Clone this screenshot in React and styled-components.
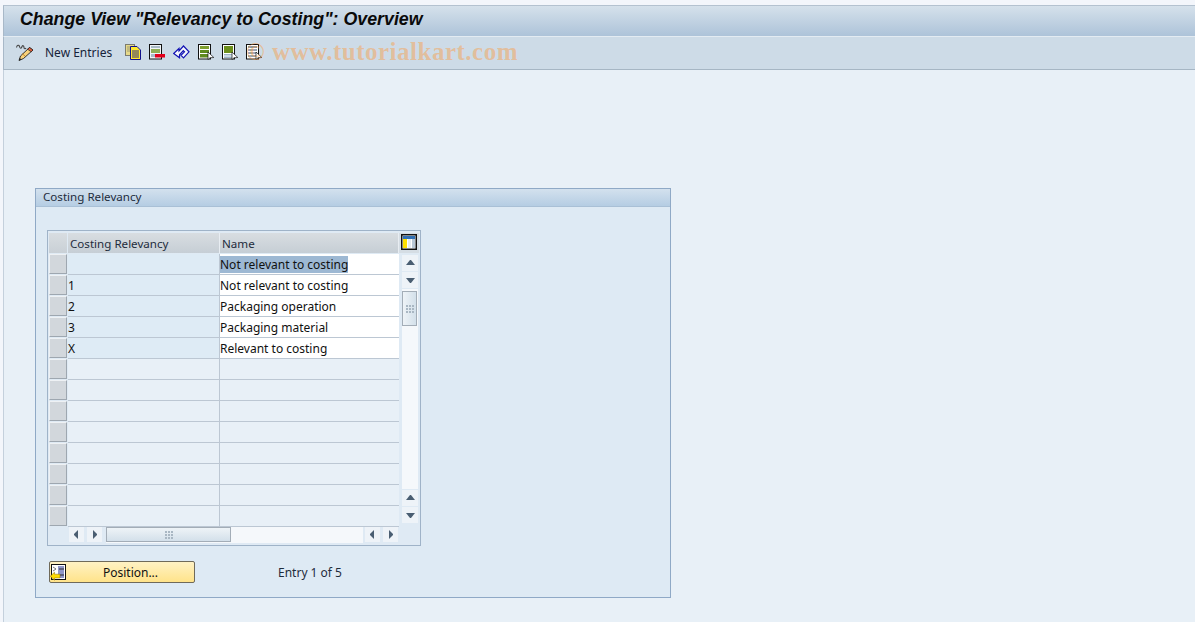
import React from "react";
import styled, { createGlobalStyle } from "styled-components";

const rows = [
  { code: "", name: "Not relevant to costing", selected: true },
  { code: "1", name: "Not relevant to costing" },
  { code: "2", name: "Packaging operation" },
  { code: "3", name: "Packaging material" },
  { code: "X", name: "Relevant to costing" },
  { code: "", name: "", empty: true },
  { code: "", name: "", empty: true },
  { code: "", name: "", empty: true },
  { code: "", name: "", empty: true },
  { code: "", name: "", empty: true },
  { code: "", name: "", empty: true },
  { code: "", name: "", empty: true },
  { code: "", name: "", empty: true },
];

//small triangle used by all the scroll buttons
const Arrow = ({ dir }) => {
  const pts = {
    up: "1,7 5,2 6,2 10,7",
    down: "1,3 10,3 6,8 5,8",
    left: "7,1 7,10 3,6 3,5",
    right: "4,1 4,10 8,6 8,5",
  };
  return (
    <svg width="11" height="11" viewBox="0 0 11 11">
      <polygon points={pts[dir]} fill="#4a5e72" />
    </svg>
  );
};

const Grip = () => (
  <svg width="8" height="8" viewBox="0 0 8 8">
    <g fill="#a9b7c3">
      <rect x="0" y="0" width="2" height="2" />
      <rect x="3" y="0" width="2" height="2" />
      <rect x="6" y="0" width="2" height="2" />
      <rect x="0" y="3" width="2" height="2" />
      <rect x="3" y="3" width="2" height="2" />
      <rect x="6" y="3" width="2" height="2" />
      <rect x="0" y="6" width="2" height="2" />
      <rect x="3" y="6" width="2" height="2" />
      <rect x="6" y="6" width="2" height="2" />
    </g>
  </svg>
);

const PencilIcon = () => (
  <svg width="18" height="17" viewBox="0 0 18 17">
    <path d="M0.5 3.5 C1 1 3 0.5 3.5 2.5 C4 5 5.5 4.5 6 2.5 C6.5 1 8 1.5 8 3.5 C8 5 9.5 5 10 4" fill="none" stroke="#444" strokeWidth="1.1" />
    <path d="M13.5 3.5 L17 6 L7.5 14.5 L3 16.5 L4.5 12 Z" fill="#f8d27a" stroke="#222" strokeWidth="0.9" />
    <path d="M13.5 3.5 L17 6 L15.2 7.8 L11.6 5.2 Z" fill="#e2603f" stroke="#222" strokeWidth="0.7" />
    <path d="M6 9.5 L9 12" stroke="#c98a2b" strokeWidth="1" />
    <path d="M3 16.5 L3.7 14 L5.6 15.4 Z" fill="#222" />
  </svg>
);

const CopyIcon = () => (
  <svg width="16" height="16" viewBox="0 0 16 16">
    <rect x="0.5" y="0.5" width="9" height="11" fill="#e6d98a" stroke="#7c7c70" />
    <path d="M2 3 H8 M2 5 H8 M2 7 H5" stroke="#8a8a70" strokeWidth="0.8" />
    <path d="M5.5 2.5 H12 L15.5 6 V15.5 H5.5 Z" fill="#ffe92e" stroke="#12128c" />
    <path d="M7 7 H14 M7 9 H14 M7 11 H14 M7 13 H14" stroke="#12128c" strokeWidth="0.9" />
  </svg>
);

const DeleteRowIcon = () => (
  <svg width="16" height="16" viewBox="0 0 16 16">
    <rect x="0.5" y="0.5" width="12" height="14.5" fill="#f2f5f7" stroke="#111" />
    <rect x="2" y="2" width="9" height="2" fill="#a9bac6" />
    <rect x="2" y="5" width="9" height="4" fill="#8fae56" />
    <rect x="2" y="10" width="4" height="3" fill="#a9bac6" />
    <rect x="6" y="10" width="10" height="3.5" fill="#e3001b" />
  </svg>
);

const UndoIcon = () => (
  <svg width="17" height="14" viewBox="0 0 17 14">
    <path
      d="M0.7 8.5 L6 3.5 L6 6 L10.5 1 L16 6.8 L10.5 12.8 L8 10.3 L11.5 6.8 L10.3 5.7 L6.5 9.8 L6.5 12.8 Z"
      fill="#f7f9fc"
      stroke="#1414b4"
      strokeWidth="1.2"
      strokeLinejoin="miter"
    />
  </svg>
);

const BlockIcon = ({ variant }) => (
  <svg width="16" height="16" viewBox="0 0 16 16">
    <rect x="0.5" y="0.5" width="12" height="14.5" fill="#fff" stroke="#111" />
    {variant === "top" && (
      <>
        <rect x="2" y="2" width="9" height="7" fill="#6c8f1c" />
        <rect x="2" y="10" width="9" height="1.5" fill="#9cb4c8" />
        <rect x="2" y="12.5" width="9" height="1.5" fill="#9cb4c8" />
      </>
    )}
    {variant === "mid" && (
      <>
        <rect x="2" y="2" width="9" height="3" fill="#7fa02f" />
        <rect x="2" y="6" width="9" height="3" fill="#5f8a1e" />
        <rect x="2" y="10" width="9" height="3.5" fill="#5f8a1e" />
      </>
    )}
    {variant === "plain" && (
      <>
        <rect x="2" y="2" width="9" height="2" fill="#8a97a3" />
        <rect x="2" y="5" width="9" height="2" fill="#9aa7b3" />
        <rect x="2" y="8" width="9" height="2" fill="#9aa7b3" />
        <rect x="2" y="11" width="9" height="2" fill="#9aa7b3" />
      </>
    )}
    <path d="M10 8 L10 15.5 L12 13.8 L15.8 13.5 Z" fill="#fff" stroke="#111" strokeWidth="0.7" />
  </svg>
);

const ColumnsIcon = () => (
  <svg width="16" height="16" viewBox="0 0 16 16">
    <rect x="0.75" y="0.75" width="14.5" height="14.5" fill="#fff" stroke="#111" strokeWidth="1.5" />
    <rect x="2" y="2" width="12" height="3" fill="#2f6fb4" />
    <rect x="2" y="5" width="4" height="9" fill="#ffe000" />
    <rect x="7" y="5" width="3" height="9" fill="#e6ebf0" />
    <rect x="11" y="5" width="3" height="9" fill="#b9c8d6" />
  </svg>
);

const PositionIcon = () => (
  <svg width="17" height="17" viewBox="0 0 17 17">
    <rect x="1.5" y="0.5" width="14" height="15" fill="#fff" stroke="#111" />
    <rect x="8" y="2" width="6" height="12" fill="#8f96c8" />
    <path d="M9 5 H14 M10 11 H14" stroke="#222" strokeWidth="0.9" />
    <path d="M3 3 L6 5 L3 7" fill="none" stroke="#555" strokeWidth="0.8" />
    <path d="M0.3 12.2 L4.5 8.2 V10.2 H10 V14 H4.5 V16.2 Z" fill="#ffdc00" stroke="#8a6a00" strokeWidth="0.5" />
  </svg>
);

function App() {
  return (
    <Page>
      <GlobalStyle />
      <TitleBar>
        <Title>Change View "Relevancy to Costing": Overview</Title>
      </TitleBar>
      <Toolbar>
        <ToolIcon $w={29}>
          <PencilIcon />
        </ToolIcon>
        <ToolLabel>New Entries</ToolLabel>
        <IconGroup>
          <CopyIcon />
          <DeleteRowIcon />
          <UndoIcon />
          <BlockIcon variant="mid" />
          <BlockIcon variant="top" />
          <BlockIcon variant="plain" />
        </IconGroup>
        <Watermark>© www.tutorialkart.com</Watermark>
      </Toolbar>
      <Content>
        <Panel>
          <PanelHead>Costing Relevancy</PanelHead>
          <PanelBody>
            <TableBox>
              <Grid>
                <Corner />
                <HeadCell $w={152}>Costing Relevancy</HeadCell>
                <HeadCell $w={179}>Name</HeadCell>
                <ConfigCell>
                  <ColumnsIcon />
                </ConfigCell>
              </Grid>
              <Middle>
                <RowsWrap>
                  {rows.map((r, i) => (
                    <Row key={i}>
                      <RowSelect />
                      <CodeCell $empty={r.empty}>{r.code}</CodeCell>
                      <NameCell $empty={r.empty}>
                        {r.selected ? <Selected>{r.name}</Selected> : r.name}
                      </NameCell>
                    </Row>
                  ))}
                </RowsWrap>
                <VScroll>
                  <ScrollBtn>
                    <Arrow dir="up" />
                  </ScrollBtn>
                  <ScrollBtn>
                    <Arrow dir="down" />
                  </ScrollBtn>
                  <VTrack>
                    <VThumb>
                      <Grip />
                    </VThumb>
                  </VTrack>
                  <ScrollBtn>
                    <Arrow dir="up" />
                  </ScrollBtn>
                  <ScrollBtn>
                    <Arrow dir="down" />
                  </ScrollBtn>
                </VScroll>
              </Middle>
              <HScroll>
                <HScrollBtn>
                  <Arrow dir="left" />
                </HScrollBtn>
                <HScrollBtn>
                  <Arrow dir="right" />
                </HScrollBtn>
                <HTrack>
                  <HThumb>
                    <Grip />
                  </HThumb>
                </HTrack>
                <HScrollBtn>
                  <Arrow dir="left" />
                </HScrollBtn>
                <HScrollBtn>
                  <Arrow dir="right" />
                </HScrollBtn>
              </HScroll>
            </TableBox>
            <Footer>
              <PositionButton>
                <PositionIcon />
                <span>Position...</span>
              </PositionButton>
              <EntryText>Entry 1 of 5</EntryText>
            </Footer>
          </PanelBody>
        </Panel>
      </Content>
    </Page>
  );
}

const uiFont = `"Noto Sans", "DejaVu Sans", sans-serif`;

const GlobalStyle = createGlobalStyle`
  html, body {
    margin: 0;
    padding: 0;
    background: #f3f6fb;
  }
  body {
    font-family: ${uiFont};
    font-size: 12px;
    color: #111;
  }
`;

const Page = styled.div`
  width: 1195px;
  height: 622px;
  overflow: hidden;
  box-sizing: border-box;
  padding: 5px 0 0 3px;
`;

const TitleBar = styled.div`
  height: 31px;
  box-sizing: border-box;
  padding: 0 0 3px 16px;
  display: flex;
  align-items: center;
  border-top: 1px solid #b4c2d0;
  border-left: 1px solid #a8b8c8;
  background: linear-gradient(#d5e1eb, #adc3d9);
`;

const Title = styled.h1`
  margin: 0;
  font-family: "Liberation Sans", Arial, sans-serif;
  font-size: 17.8px;
  font-weight: bold;
  font-style: italic;
  color: #0a0a0a;
  white-space: nowrap;
`;

const Toolbar = styled.div`
  height: 34px;
  box-sizing: border-box;
  display: flex;
  align-items: center;
  padding: 0 0 2px 12px;
  background: #cddbe7;
  border-top: 1px solid #e3ebf2;
  border-left: 1px solid #a8b8c8;
  border-bottom: 1px solid #a6b6c4;
`;

const ToolIcon = styled.span`
  display: flex;
  width: ${(p) => p.$w}px;
`;

const ToolLabel = styled.span`
  color: #16233a;
  width: 80px;
  white-space: nowrap;
`;

const IconGroup = styled.div`
  display: flex;
  align-items: center;
  gap: 8px;
`;

const Watermark = styled.span`
  margin-left: -16px;
  font-family: "Liberation Serif", serif;
  font-size: 25px;
  font-weight: bold;
  letter-spacing: 0.5px;
  color: rgba(255, 150, 50, 0.42);
  white-space: nowrap;
`;

const Content = styled.div`
  height: 552px;
  box-sizing: border-box;
  padding: 118px 0 0 31px;
  background: #e8f0f7;
  border-left: 1px solid #c4d0dc;
`;

const Panel = styled.section`
  width: 636px;
  height: 410px;
  box-sizing: border-box;
  border: 1px solid #8fa9c6;
  display: flex;
  flex-direction: column;
  background: #deeaf4;
`;

const PanelHead = styled.div`
  height: 17px;
  line-height: 15px;
  padding-left: 7px;
  font-size: 11.6px;
  color: #1e2c3c;
  background: linear-gradient(#d3e1ee, #b5cde3);
  border-bottom: 1px solid #a9c0d6;
`;

const PanelBody = styled.div`
  flex: 1;
  padding: 23px 0 0 11px;
`;

const TableBox = styled.div`
  width: 374px;
  height: 316px;
  box-sizing: border-box;
  border: 1px solid #9fb3c8;
  padding: 2px 0 0 1px;
  background: #dfeaf4;
`;

const Grid = styled.div`
  display: flex;
  height: 21px;
`;

const Corner = styled.div`
  width: 18px;
  height: 20px;
  margin-right: 1px;
  background: linear-gradient(#d8dde1, #c9d0d6);
`;

const HeadCell = styled.div`
  width: ${(p) => p.$w}px;
  height: 20px;
  box-sizing: border-box;
  padding-left: 2px;
  line-height: 21px;
  font-size: 11.6px;
  color: #1e2c3c;
  background: linear-gradient(#d8dde1, #c6ced5);
  border-right: 1px solid #e8edf2;
`;

const ConfigCell = styled.div`
  width: 20px;
  height: 20px;
  display: flex;
  justify-content: center;
  align-items: flex-start;
  padding-top: 1px;
  box-sizing: border-box;
  background: #d5dde4;
`;

const Middle = styled.div`
  display: flex;
`;

const RowsWrap = styled.div`
  width: 350px;
`;

const Row = styled.div`
  display: flex;
  height: 21px;
`;

const RowSelect = styled.div`
  width: 18px;
  height: 20px;
  box-sizing: border-box;
  margin-right: 1px;
  background: #d2d7dc;
  border-top: 1px solid #eef1f4;
  border-left: 1px solid #eef1f4;
  border-right: 1px solid #9ea7b0;
  border-bottom: 1px solid #9ea7b0;
`;

const CodeCell = styled.div`
  width: 152px;
  height: 21px;
  box-sizing: border-box;
  line-height: 21px;
  background: ${(p) => (p.$empty ? "#e8f0f7" : "#deebf5")};
  border-right: 1px solid #bcc7d3;
  border-bottom: 1px solid #bcc7d3;
`;

const NameCell = styled.div`
  width: 179px;
  height: 21px;
  box-sizing: border-box;
  line-height: 21px;
  background: ${(p) => (p.$empty ? "#e8f0f7" : "#ffffff")};
  border-bottom: 1px solid #bcc7d3;
`;

const Selected = styled.span`
  background: #9db8d3;
`;

const VScroll = styled.div`
  width: 21px;
  display: flex;
  flex-direction: column;
  padding: 1px 0 4px 3px;
  box-sizing: border-box;
  gap: 1px;
`;

const ScrollBtn = styled.div`
  width: 16px;
  height: 16px;
  display: flex;
  align-items: center;
  justify-content: center;
  background: #eef3f8;
`;

const VTrack = styled.div`
  flex: 1;
  width: 16px;
  padding-top: 2px;
  background: #f5f8fb;
`;

const VThumb = styled.div`
  width: 15px;
  height: 35px;
  box-sizing: border-box;
  display: flex;
  align-items: center;
  justify-content: center;
  border: 1px solid #a3adb7;
  background: linear-gradient(90deg, #eef3f7, #d3e0ea);
`;

const HScroll = styled.div`
  display: flex;
  align-items: flex-start;
  height: 18px;
  padding-left: 20px;
`;

const HScrollBtn = styled.div`
  width: 15px;
  height: 15px;
  margin-right: 3px;
  display: flex;
  align-items: center;
  justify-content: center;
  background: #eef3f8;
`;

const HTrack = styled.div`
  width: 257px;
  height: 16px;
  margin: 0 2px 0 1px;
  background: #f5f8fb;
`;

const HThumb = styled.div`
  width: 125px;
  height: 15px;
  box-sizing: border-box;
  display: flex;
  align-items: center;
  justify-content: center;
  border: 1px solid #a3adb7;
  background: linear-gradient(#eef3f7, #d3e0ea);
`;

const Footer = styled.div`
  display: flex;
  align-items: center;
  margin: 15px 0 0 2px;
`;

const PositionButton = styled.button`
  width: 146px;
  height: 22px;
  padding: 0;
  box-sizing: border-box;
  display: flex;
  align-items: center;
  border: 1px solid #6f6a5a;
  border-radius: 2px;
  background: linear-gradient(#fff2c4, #ffe38a);
  font-family: ${uiFont};
  font-size: 12px;
  color: #111;
  svg {
    flex: none;
  }
  span {
    flex: 1;
    text-align: center;
  }
`;

const EntryText = styled.div`
  margin-left: 83px;
  color: #1e2c3c;
`;

export default App;
